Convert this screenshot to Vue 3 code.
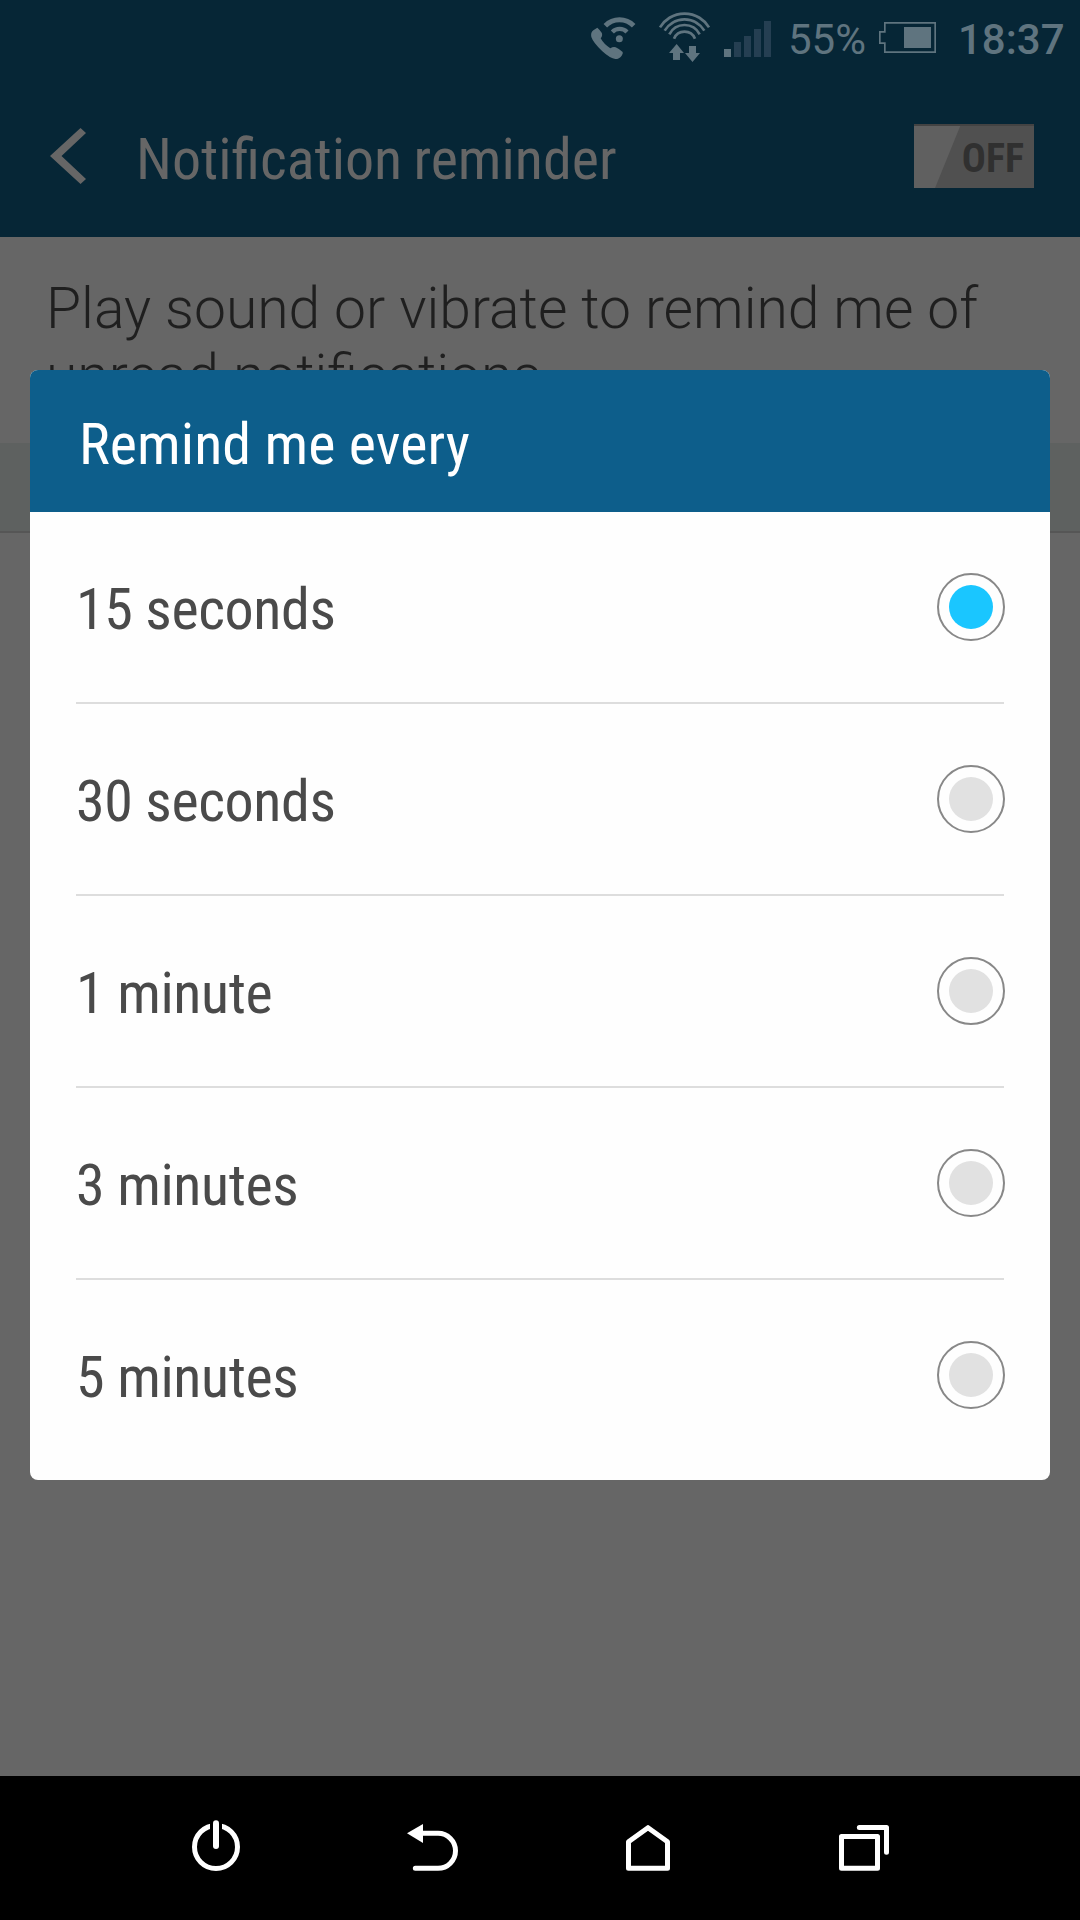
<script setup>
import { ref } from 'vue';

const options = ["15 seconds", "30 seconds", "1 minute", "3 minutes", "5 minutes"];
const selected = ref(0);
</script>

<template>
  <div class="screen">
    <div class="status-bar">
      <svg class="call" viewBox="60 45 138 135">
        <path class="fill" d="M82 83 Q88 88 95 98 Q99 106 92 115 Q101 132 121 145 Q130 139 137 142 Q150 148 158 156 Q160 160 155 167 Q148 177 136 177 Q121 176 97 154 Q69 127 64 111 Q61 98 70 91 Z" />
        <circle class="fill" cx="148" cy="116" r="10.5" />
        <path class="line" stroke-width="13" d="M127 96 A31 31 0 0 1 171 96" />
        <path class="line" stroke-width="15" d="M106 77 A60 60 0 0 1 191 77" />
      </svg>
      <svg class="wifi" viewBox="264 36 159 153">
        <path class="line" stroke-width="8" d="M270 82 A86 86 0 0 1 417 82 M284 92 A69 69 0 0 1 403 92 M298 103 A51 51 0 0 1 389 103 M312 116 A34 34 0 0 1 375 116" />
        <path class="fill" d="M320 132 L342 159 H330 V180 H309 V159 H297 Z M357 138 H378 V159 H390 L367.500 186 L345 159 H357 Z" />
      </svg>
      <svg class="signal" viewBox="462 63 141 108">
        <path class="fill" d="M462 147 h21 v24 h-21 Z" />
        <path class="off-bars" d="M492 126 h21 v45 h-21 Z M522 108 h21 v63 h-21 Z M552 87 h21 v84 h-21 Z M582 63 h21 v108 h-21 Z" />
      </svg>
      <span class="percent">55%</span>
      <svg class="battery" viewBox="177 66 171 93">
        <path class="line" stroke-width="5" d="M194.500 68.500 H345.500 V156.500 H194.500 V129.500 H179.500 V95.500 H194.500 Z" />
        <path class="fill" d="M252 81 H333 V144 H252 Z" />
      </svg>
      <span class="clock">18:37</span>
    </div>
    <div class="app-bar">
      <svg class="back" viewBox="0 0 36 58">
        <path d="M30.500 1 L36 6 L11.500 29 L36 52 L30.500 57 L0 29 Z" />
      </svg>
      <h1>Notification reminder</h1>
      <div class="toggle">
        <svg viewBox="0 0 120 64">
          <path d="M0 0 H47 L21 64 H0 Z" fill="#606060" />
          <path d="M0 0 H120 V2 H0 Z" fill="#434343" />
        </svg>
        <span>OFF</span>
      </div>
    </div>
    <div class="content">
      <p>Play sound or vibrate to remind me of<br>unread notifications.</p>
      <div class="section"></div>
    </div>

    <div class="nav">
      <svg viewBox="30 126 216 216">
        <circle class="stroke" cx="138" cy="231" r="64.500" />
        <path d="M138 150 V185" stroke="#000" stroke-width="36" />
        <path class="stroke thick" d="M138 160 V228" />
      </svg>
      <svg viewBox="678 126 216 216">
        <path class="stroke" d="M757 190 H804 A52.500 52.500 0 0 1 804 295 H736" />
        <path class="tip" d="M711 190 L759 162 V219 Z" />
      </svg>
      <svg viewBox="36 126 216 216">
        <path class="stroke" d="M85.500 215 L144 173 L202.500 215 V295 H85.500 Z" />
      </svg>
      <svg viewBox="684 126 216 216">
        <path class="stroke" d="M724.500 199.500 H832.500 V295 H724.500 Z M778 172.500 H859.500 V247" />
      </svg>
    </div>

    <div class="dialog">
      <h2>Remind me every</h2>
      <ul>
        <li v-for="(option, idx) in options" :key="option" @click="selected = idx">
          <span>{{ option }}</span>
          <i class="radio" :class="{ active: idx == selected }"></i>
        </li>
      </ul>
    </div>
  </div>
</template>

<style>
body {
  margin: 0;
  background: #666;
}
</style>

<style scoped>
.screen {
  position: relative;
  display: flex;
  flex-direction: column;
  width: 1080px;
  height: 1920px;
  overflow: hidden;
  background: #666;
  font-family: "Roboto Condensed", Roboto, sans-serif;
  font-stretch: 75%;
  font-size: 58px;
}

svg {
  display: block;
  flex: none;
}

h1, h2, p, ul {
  margin: 0;
  padding: 0;
  font-weight: 400;
  white-space: nowrap;
}

h1, h2 {
  font-size: 58px;
}

.status-bar {
  display: flex;
  align-items: flex-start;
  height: 76px;
  padding-left: 590px;
  background: #062636;
  color: #5f747f;
  font-family: Roboto, sans-serif;
  font-stretch: 100%;
  font-size: 42px;
  line-height: 48px;
}

.status-bar .fill {
  fill: #5f747f;
}

.status-bar .line {
  fill: none;
  stroke: #5f747f;
}

.off-bars {
  fill: #253f52;
}

.call {
  width: 46px;
  height: 45px;
  margin-top: 15px;
}

.wifi {
  width: 53px;
  height: 51px;
  margin: 12px 0 0 22px;
}

.signal {
  width: 47px;
  height: 36px;
  margin: 21px 0 0 13px;
}

.percent {
  width: 91px;
  margin: 16px 0 0 17px;
}

.battery {
  width: 57px;
  height: 31px;
  margin-top: 22px;
}

.clock {
  margin: 16px 0 0 22px;
  font-weight: 500;
}

.app-bar {
  display: flex;
  align-items: center;
  box-sizing: border-box;
  height: 161px;
  padding: 0 46px 2px 50px;
  background: #062636;
  color: #666;
}

.back {
  width: 36px;
  height: 58px;
  fill: #666;
}

h1 {
  flex: 1;
  margin-left: 50px;
  padding-top: 6px;
  word-spacing: -2px;
}

.toggle {
  position: relative;
  width: 120px;
  height: 64px;
  background: #505050;
  color: #303030;
}

.toggle span {
  position: absolute;
  right: 10px;
  top: 11px;
  font-size: 40px;
  line-height: 48px;
  font-weight: 700;
}

.content {
  flex: 1;
}

.content p {
  box-sizing: border-box;
  height: 206px;
  padding: 38px 0 0 46px;
  color: #1f1f1f;
  font-family: Roboto, sans-serif;
  font-stretch: 100%;
  font-size: 57px;
  font-weight: 300;
  line-height: 67px;
}

.section {
  height: 88px;
  background: #5e6160;
  border-bottom: 2px solid #565656;
}

.nav {
  display: flex;
  align-items: center;
  justify-content: space-around;
  height: 144px;
  padding: 0 108px;
  background: #000;
}

.nav svg {
  width: 72px;
  height: 72px;
}

.stroke {
  fill: none;
  stroke: #fff;
  stroke-width: 15;
  stroke-linecap: round;
  stroke-linejoin: round;
}

.stroke.thick {
  stroke-width: 18;
}

.tip {
  fill: #fff;
}

.dialog {
  position: absolute;
  left: 30px;
  top: 370px;
  width: 1020px;
  height: 1110px;
  border-radius: 8px;
  overflow: hidden;
  background: #fefefe;
}

h2 {
  height: 142px;
  padding-left: 49px;
  background: #0d5e8b;
  color: #fff;
  line-height: 148px;
  letter-spacing: 0.05px;
}

ul {
  padding: 0 46px;
  list-style: none;
}

li {
  display: flex;
  align-items: center;
  justify-content: space-between;
  box-sizing: border-box;
  height: 192px;
  border-bottom: 2px solid #ddd;
  color: #4a4a4a;
}

li span {
  padding-top: 4px;
  letter-spacing: -0.4px;
}

li:last-child {
  border-bottom-color: transparent;
}

.radio {
  box-sizing: border-box;
  width: 68px;
  height: 68px;
  margin-right: -1px;
  padding: 10px;
  border: 2px solid #888;
  border-radius: 50%;
  background: #e1e1e1 content-box;
}

.radio.active {
  background-color: #1ac6ff;
}
</style>
